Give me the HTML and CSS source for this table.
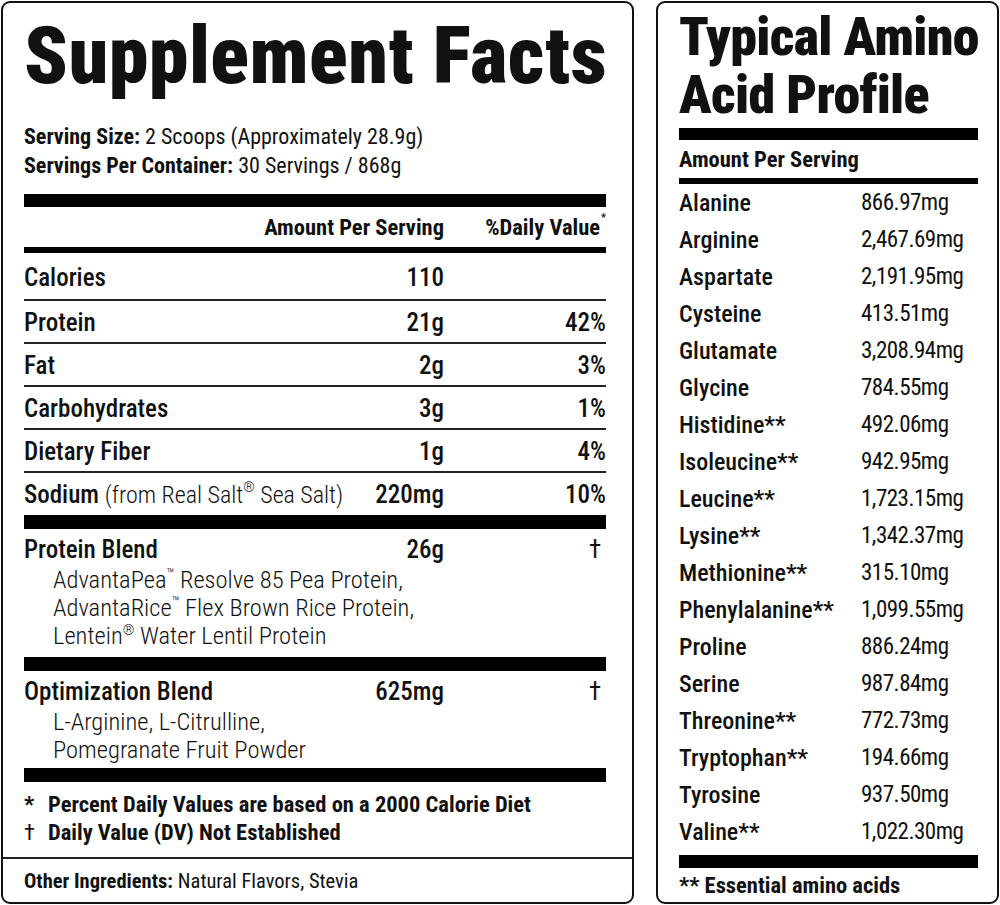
FILE: index.html
```html
<!DOCTYPE html>
<html lang="en">
<head>
<meta charset="utf-8">
<title>Supplement Facts</title>
<link rel="stylesheet" href="styles.css">
</head>
<body>
<div class="page">
  <section class="panel facts">
    <div class="facts-body">
      <h1 class="facts-title">Supplement Facts</h1>
      <div class="serving">
        <p><b>Serving Size:</b> 2 Scoops (Approximately 28.9g)</p>
        <p><b>Servings Per Container:</b> 30 Servings / 868g</p>
      </div>
      <div class="bar bar-thick bar-first"></div>
      <div class="row head">
        <span class="name"></span>
        <span class="amt">Amount Per Serving</span>
        <span class="dv">%Daily Value<sup>*</sup></span>
      </div>
      <div class="bar bar-mid"></div>
      <div class="row nut cal"><span class="name">Calories</span><span class="amt">110</span><span class="dv"></span></div>
      <div class="row nut"><span class="name">Protein</span><span class="amt">21g</span><span class="dv">42%</span></div>
      <div class="row nut"><span class="name">Fat</span><span class="amt">2g</span><span class="dv">3%</span></div>
      <div class="row nut"><span class="name">Carbohydrates</span><span class="amt">3g</span><span class="dv">1%</span></div>
      <div class="row nut"><span class="name">Dietary Fiber</span><span class="amt">1g</span><span class="dv">4%</span></div>
      <div class="row nut last"><span class="name">Sodium <span class="light">(from Real Salt<sup class="mark-sym">®</sup> Sea Salt)</span></span><span class="amt">220mg</span><span class="dv">10%</span></div>
      <div class="bar bar-thick"></div>
      <div class="blend blend-protein">
        <div class="row blend-row"><span class="name">Protein Blend</span><span class="amt">26g</span><span class="dv dag">†</span></div>
        <div class="blend-items">
          <p>AdvantaPea<sup class="mark-sym">™</sup> Resolve 85 Pea Protein,</p>
          <p>AdvantaRice<sup class="mark-sym">™</sup> Flex Brown Rice Protein,</p>
          <p>Lentein<sup class="mark-sym">®</sup> Water Lentil Protein</p>
        </div>
      </div>
      <div class="bar bar-thick"></div>
      <div class="blend blend-opt">
        <div class="row blend-row"><span class="name">Optimization Blend</span><span class="amt">625mg</span><span class="dv dag">†</span></div>
        <div class="blend-items">
          <p>L-Arginine, L-Citrulline,</p>
          <p>Pomegranate Fruit Powder</p>
        </div>
      </div>
      <div class="bar bar-thick"></div>
      <div class="notes">
        <p><span class="mark">*</span>Percent Daily Values are based on a 2000 Calorie Diet</p>
        <p><span class="mark dagger">†</span>Daily Value (DV) Not Established</p>
      </div>
    </div>
    <div class="other"><b>Other Ingredients:</b> Natural Flavors, Stevia</div>
  </section>

  <section class="panel amino">
    <h2 class="amino-title">Typical Amino<br>Acid Profile</h2>
    <div class="bar bar-amino-top"></div>
    <div class="amino-head">Amount Per Serving</div>
    <div class="bar bar-mid"></div>
    <div class="amino-list">
      <div class="arow"><span class="aname">Alanine</span><span class="aval">866.97mg</span></div>
      <div class="arow"><span class="aname">Arginine</span><span class="aval">2,467.69mg</span></div>
      <div class="arow"><span class="aname">Aspartate</span><span class="aval">2,191.95mg</span></div>
      <div class="arow"><span class="aname">Cysteine</span><span class="aval">413.51mg</span></div>
      <div class="arow"><span class="aname">Glutamate</span><span class="aval">3,208.94mg</span></div>
      <div class="arow"><span class="aname">Glycine</span><span class="aval">784.55mg</span></div>
      <div class="arow"><span class="aname">Histidine**</span><span class="aval">492.06mg</span></div>
      <div class="arow"><span class="aname">Isoleucine**</span><span class="aval">942.95mg</span></div>
      <div class="arow"><span class="aname">Leucine**</span><span class="aval">1,723.15mg</span></div>
      <div class="arow"><span class="aname">Lysine**</span><span class="aval">1,342.37mg</span></div>
      <div class="arow"><span class="aname">Methionine**</span><span class="aval">315.10mg</span></div>
      <div class="arow"><span class="aname">Phenylalanine**</span><span class="aval">1,099.55mg</span></div>
      <div class="arow"><span class="aname">Proline</span><span class="aval">886.24mg</span></div>
      <div class="arow"><span class="aname">Serine</span><span class="aval">987.84mg</span></div>
      <div class="arow"><span class="aname">Threonine**</span><span class="aval">772.73mg</span></div>
      <div class="arow"><span class="aname">Tryptophan**</span><span class="aval">194.66mg</span></div>
      <div class="arow"><span class="aname">Tyrosine</span><span class="aval">937.50mg</span></div>
      <div class="arow"><span class="aname">Valine**</span><span class="aval">1,022.30mg</span></div>
    </div>
    <div class="bar bar-amino-bottom"></div>
    <div class="amino-note">** Essential amino acids</div>
  </section>
</div>
</body>
</html>
```
FILE: styles.css
```css
* { box-sizing: border-box; }
html, body { margin: 0; padding: 0; background: #fff; }
body {
  font-family: "Roboto Condensed", "Roboto", "Liberation Sans", sans-serif;
  color: #111;
}
p { margin: 0; }

.page {
  display: flex;
  gap: 22px;
  padding: 1px;
  width: 1000px;
  height: 905px;
}

.panel {
  border: 2px solid #111;
  border-radius: 9px;
  height: 903px;
  display: flex;
  flex-direction: column;
}

/* ---------- Supplement facts ---------- */
.facts { width: 633px; }
.facts-body {
  flex: 1;
  padding: 13px 26px 0 21px;
}
.facts-title {
  margin: 0;
  font-size: 80px;
  line-height: 80px;
  font-weight: 900;
  letter-spacing: 0.5px;
  white-space: nowrap;
}
.serving {
  margin-top: 26px;
  font-size: 22px;
  line-height: 29px;
}
.serving b { font-weight: 700; }

.bar { background: #000; }
.bar-thick { height: 14px; }
.bar-first { margin-top: 14px; height: 13px; }
.bar-mid { height: 6px; }

.mark-sym {
  font-size: 0.6em;
  vertical-align: top;
  position: relative;
  top: 0.1em;
  line-height: 1;
}

.row {
  display: flex;
  align-items: center;
}
.row .name { flex: 1; white-space: nowrap; }
.row .amt { text-align: right; white-space: nowrap; }
.row .dv { width: 162px; text-align: right; white-space: nowrap; }

.head {
  height: 40px;
  font-size: 22.5px;
  font-weight: 700;
}
.head sup {
  font-size: 11px;
  vertical-align: top;
  position: relative;
  top: -3px;
  margin-left: 1px;
}

.nut {
  height: 43px;
  font-size: 25px;
  font-weight: 500;
  border-bottom: 2px solid #222;
  padding-top: 1px;
}
.nut.cal { height: 48px; padding-top: 2px; }
.nut.last { border-bottom: none; height: 42px; }
.nut .dv { font-weight: 500; }
.light { font-weight: 300; font-size: 24px; }

.blend { padding-top: 6px; }
.blend-row {
  height: 28px;
  font-size: 25px;
  font-weight: 500;
}
.blend-row .dag { font-weight: 400; padding-right: 5px; }
.blend-items {
  margin-top: 3px;
  padding-left: 29px;
  font-size: 24.5px;
  font-weight: 300;
  line-height: 28px;
}
.blend-protein { padding-bottom: 7px; }
.blend-opt { padding-bottom: 4px; }

.notes {
  margin-top: 8px;
  font-size: 22.5px;
  font-weight: 700;
  line-height: 28px;
}
.notes .mark {
  display: inline-block;
  width: 24px;
}
.notes .dagger { font-weight: 400; }

.other {
  border-top: 2px solid #222;
  height: 45px;
  padding: 0 21px;
  display: flex;
  align-items: center;
  font-size: 20.5px;
}
.other b { font-weight: 700; margin-right: 5px; }

/* ---------- Amino profile ---------- */
.amino {
  width: 343px;
  padding: 5px 19px 0 21px;
}
.amino-title {
  margin: 0;
  font-size: 54px;
  line-height: 58px;
  font-weight: 900;
  letter-spacing: -0.7px;
  white-space: nowrap;
}
.bar-amino-top { height: 12px; margin-top: 4px; }
.amino-head {
  height: 38px;
  display: flex;
  align-items: center;
  font-size: 22.5px;
  font-weight: 700;
}
.amino-list { display: flex; flex-direction: column; }
.arow {
  display: grid;
  grid-template-columns: 182px 1fr;
  align-items: center;
  height: 37px;
  font-size: 24px;
}
.aname { font-weight: 500; white-space: nowrap; }
.aval { font-weight: 400; white-space: nowrap; font-size: 23px; letter-spacing: -0.5px; }
.bar-amino-bottom { height: 13px; margin-top: 5px; }
.amino-note {
  flex: 1;
  display: flex;
  align-items: center;
  font-size: 22.5px;
  font-weight: 700;
}
```
